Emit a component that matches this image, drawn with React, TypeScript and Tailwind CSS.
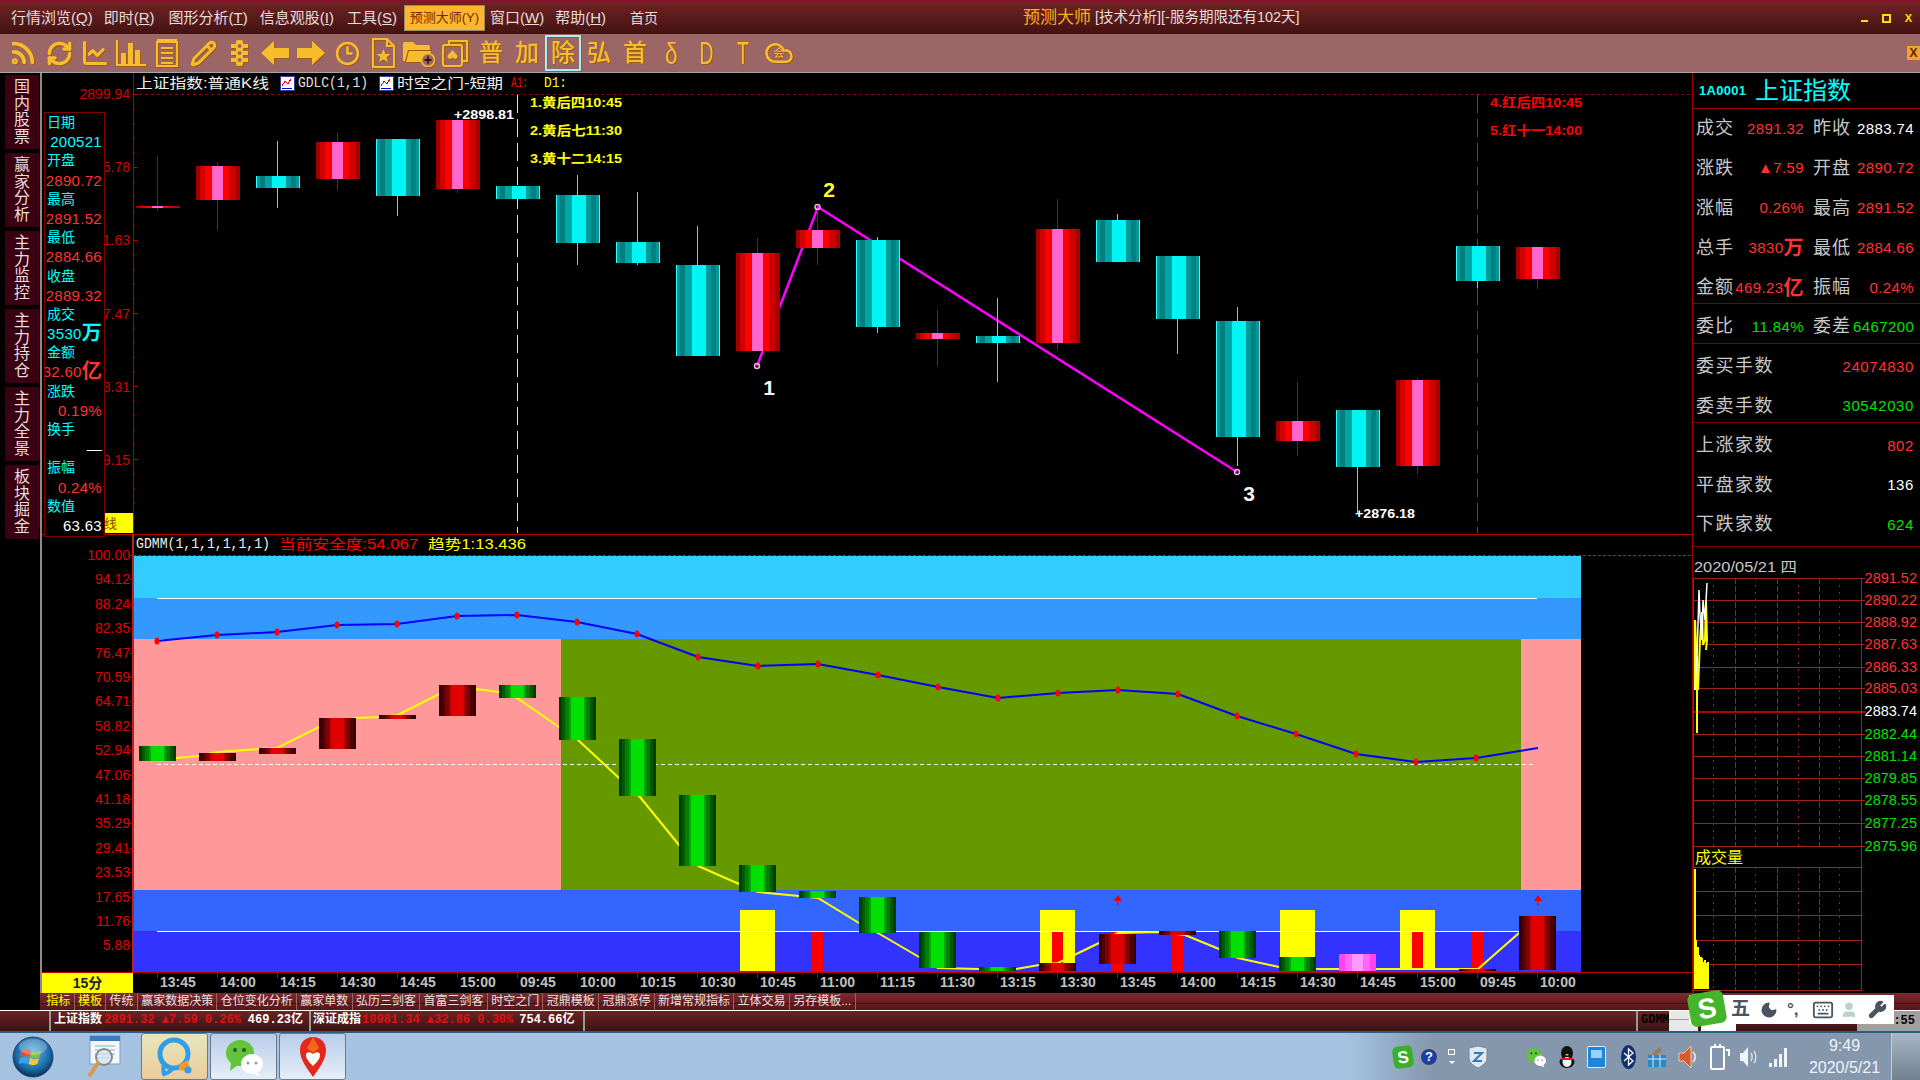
import React from "react";
import { Rss, RefreshCw, ChartLine, Pencil, Clock3, Moon, Keyboard, User, Wrench, Cloud } from "lucide-react";

const SANS = "font-['Liberation_Sans','Noto_Sans_CJK_SC',sans-serif]";
const MONO = "font-['Liberation_Mono','Noto_Sans_CJK_SC',monospace]";

type Stop = [number, string];

const Stripes = ({ id, stops }: { id: string; stops: Stop[] }) => (
  <linearGradient id={id} x1="0" x2="1" y1="0" y2="0">
    {stops.map((s, i) => (
      <React.Fragment key={i}>
        <stop offset={i === 0 ? 0 : stops[i - 1][0]} stopColor={s[1]} />
        <stop offset={s[0]} stopColor={s[1]} />
      </React.Fragment>
    ))}
  </linearGradient>
);

const redStops: Stop[] = [[0.08, "#a00000"], [0.2, "#d00000"], [0.36, "#ff0000"], [0.62, "#ff66cc"], [0.75, "#ff0000"], [0.88, "#cc0000"], [1, "#a80000"]];
const cyanStops: Stop[] = [[0.02, "#33ffff"], [0.1, "#009999"], [0.2, "#007f7f"], [0.36, "#00a5a5"], [0.68, "#00f5f5"], [0.8, "#009999"], [0.92, "#008080"], [0.97, "#009999"], [1, "#33ffff"]];
const greenStops: Stop[] = [[0.08, "#003c00"], [0.16, "#005a00"], [0.26, "#008000"], [0.33, "#00aa00"], [0.67, "#00e000"], [0.74, "#00aa00"], [0.84, "#008000"], [0.92, "#005a00"], [1, "#003c00"]];
const darkRedStops: Stop[] = [[0.08, "#300000"], [0.16, "#500000"], [0.26, "#800000"], [0.33, "#b00000"], [0.67, "#e00000"], [0.74, "#b00000"], [0.84, "#800000"], [0.92, "#500000"], [1, "#300000"]];
const pinkStops: Stop[] = [[0.15, "#ff44ee"], [0.35, "#ff66ff"], [0.65, "#ff99ff"], [0.85, "#ff66ff"], [1, "#ff44ee"]];

// i, top, bottom, wick top, wick bottom, colour
const candles: [number, number, number, number, number, "r" | "c"][] = [
  [0, 206, 208, 156, 211, "r"], [1, 166, 200, 162, 230, "r"], [2, 176, 188, 141, 208, "c"], [3, 142, 179, 133, 190, "r"],
  [4, 139, 196, 139, 216, "c"], [5, 120, 189, 116, 193, "r"], [6, 186, 199, 186, 199, "c"], [7, 195, 243, 175, 265, "c"],
  [8, 242, 263, 192, 265, "c"], [9, 265, 356, 226, 356, "c"], [10, 253, 351, 238, 351, "r"], [11, 230, 248, 210, 265, "r"],
  [12, 240, 327, 237, 333, "c"], [13, 333, 339, 310, 366, "r"], [14, 336, 343, 298, 382, "c"], [15, 229, 343, 199, 350, "r"],
  [16, 220, 262, 214, 262, "c"], [17, 256, 319, 256, 354, "c"], [18, 321, 437, 307, 466, "c"], [19, 421, 441, 382, 456, "r"],
  [20, 410, 467, 410, 514, "c"], [21, 380, 466, 378, 474, "r"], [22, 246, 281, 246, 288, "c"], [23, 247, 279, 247, 289, "r"],
];

// left, top, bottom, fill
const subCandles: [number, number, number, string][] = [
  [139, 746, 761, "g"], [199, 753, 761, "d"], [259, 748, 754, "d"], [319, 718, 749, "d"], [379, 715, 719, "d"], [439, 685, 716, "d"],
  [499, 685, 698, "g"], [559, 697, 740, "g"], [619, 739, 796, "g"], [679, 795, 866, "g"], [739, 865, 892, "g"], [799, 891, 898, "g"],
  [859, 897, 933, "g"], [919, 932, 968, "g"], [979, 967, 971, "g"], [1039, 963, 971, "d"], [1099, 934, 964, "d"], [1159, 931, 935, "d"],
  [1219, 931, 958, "g"], [1279, 957, 971, "g"], [1339, 954, 971, "p"], [1459, 969, 971, "d"], [1519, 916, 970, "d"],
];

const yellowLine = "176,758 199,756 218,752 259,749 277,748 319,727 356,718 379,717 398,715 439,694 476,689 499,692 517,698 559,727 578,740 619,778 640,797 679,845 698,866 739,884 758,892 799,896 818,898 859,923 878,933 919,957 938,968 979,969 1016,969 1039,965 1058,963 1099,943 1118,933 1159,932 1185,935 1219,949 1238,958 1279,967 1316,969 1400,969 1459,969 1478,969 1519,933";
const bluePts = [[157, 641], [217, 635], [277, 632], [337, 625], [397, 624], [457, 616], [517, 615], [577, 622], [637, 634], [698, 657], [758, 666], [818, 664], [878, 675], [938, 687], [998, 698], [1058, 693], [1118, 690], [1178, 694], [1237, 716], [1296, 734], [1356, 754], [1416, 762], [1476, 758]];

const times = ["13:45", "14:00", "14:15", "14:30", "14:45", "15:00", "09:45", "10:00", "10:15", "10:30", "10:45", "11:00", "11:15", "11:30", "13:15", "13:30", "13:45", "14:00", "14:15", "14:30", "14:45", "15:00", "09:45", "10:00"];
const subAxis = ["100.00", "94.12", "88.24", "82.35", "76.47", "70.59", "64.71", "58.82", "52.94", "47.06", "41.18", "35.29", "29.41", "23.53", "17.65", "11.76", "5.88"];
const tabs = ["指标", "模板", "传统", "赢家数据决策", "仓位变化分析", "赢家单数", "弘历三剑客", "首富三剑客", "时空之门", "冠鼎模板", "冠鼎涨停", "新增常规指标", "立体交易", "另存模板..."];
const sideTabs = ["国内股票", "赢家分析", "主力监控", "主力持仓", "主力全景", "板块掘金"];

const GOLD = "text-[#f7bd2c] drop-shadow-[1px_1px_0_#a05a14]";

const MenuItem = ({ label, k, className }: { label: string; k: string; className?: string }) => (
  <span className={`whitespace-nowrap text-[15px] text-[#e6dcdc] ${className ?? ""}`}>
    {label}(<span className="underline">{k}</span>)
  </span>
);

const MenuBar = () => (
  <div className="flex h-[34px] items-center border-t-2 border-[#8a1030] bg-linear-to-b from-[#6e2422] to-[#441213] pl-[11px]">
    <MenuItem label="行情浏览" k="Q" />
    <MenuItem label="即时" k="R" className="ml-[11px]" />
    <MenuItem label="图形分析" k="T" className="ml-[14px]" />
    <MenuItem label="信息观股" k="I" className="ml-[12px]" />
    <MenuItem label="工具" k="S" className="ml-[13px]" />
    <span className="ml-[7px] flex h-[26px] w-[81px] items-center justify-center whitespace-nowrap border border-[#9a8a60] bg-[#ffb52e] text-[13px] text-[#6b3000]">预测大师(Y)</span>
    <MenuItem label="窗口" k="W" className="ml-[5px]" />
    <MenuItem label="帮助" k="H" className="ml-[11px]" />
    <span className="ml-[24px] whitespace-nowrap text-[14px] text-[#e6dcdc]">首页</span>
    <span className="ml-[365px] whitespace-nowrap text-[17px] text-[#ffb020]">预测大师</span>
    <span className="ml-[4px] whitespace-nowrap text-[14.5px] text-[#e6dcdc]">[技术分析][-服务期限还有102天]</span>
    <div className="ml-auto mr-[8px] flex items-center gap-[14px] text-[11px] font-bold text-[#ffe000]">
      <span className="mt-[6px] block h-[2px] w-[7px] bg-[#ffe000]" />
      <span className="block h-[9px] w-[9px] border-2 border-[#ffe000]" />
      <span className="leading-none">X</span>
    </div>
  </div>
);

const Bars = () => (
  <svg width="30" height="26" viewBox="0 0 30 26" fill="currentColor">
    <rect x="0" y="0" width="2" height="26" />
    <rect x="0" y="24" width="30" height="2" />
    <rect x="5" y="13" width="5" height="11" />
    <rect x="12" y="3" width="5" height="21" />
    <rect x="19" y="10" width="5" height="14" />
  </svg>
);
const Notes = () => (
  <svg width="22" height="28" viewBox="0 0 22 28" fill="none" stroke="currentColor" strokeWidth="2">
    <rect x="1" y="3" width="20" height="24" />
    <path d="M1 1h20M5 9h12M5 14h12M5 19h12M5 24h12" />
  </svg>
);
const Traffic = () => (
  <svg width="17" height="26" viewBox="0 0 17 26" fill="currentColor">
    <rect x="5" y="0" width="7" height="26" rx="2" />
    <path d="M0 4h5v4H0zM12 4h5v4h-5zM0 11h5v4H0zM12 11h5v4h-5zM0 18h5v4H0zM12 18h5v4h-5z" />
    <circle cx="8.5" cy="6" r="2" fill="#9d6666" />
    <circle cx="8.5" cy="13" r="2" fill="#9d6666" />
    <circle cx="8.5" cy="20" r="2" fill="#9d6666" />
  </svg>
);
const ArrowL = ({ flip }: { flip?: boolean }) => (
  <svg width="28" height="24" viewBox="0 0 28 24" fill="currentColor" className={flip ? "-scale-x-100" : ""}>
    <path d="M0 12 13 0v7h15v10H13v7z" />
  </svg>
);
const DocStar = () => (
  <svg width="23" height="30" viewBox="0 0 23 30" fill="none" stroke="currentColor" strokeWidth="2">
    <path d="M1 1h14l7 7v21H1zM15 1v7h7" />
    <path d="m11.5 11 2 5h5l-4 3.2 1.5 5-4.500-3-4.500 3 1.500-5-4-3.200h5z" fill="currentColor" stroke="none" />
  </svg>
);
const FolderAdd = () => (
  <svg width="32" height="27" viewBox="0 0 32 27" fill="currentColor">
    <path d="M0 4a2 2 0 0 1 2-2h8l3 3h12a2 2 0 0 1 2 2v3H5l-3 11H0z" />
    <path d="M6 11h22l-3 11H3z" />
    <circle cx="25" cy="20" r="6.500" fill="#9d6666" stroke="currentColor" strokeWidth="1.500" />
    <path d="M25 16.500v7M21.500 20h7" stroke="#3a1a10" strokeWidth="2" />
  </svg>
);
const CardIcon = () => (
  <svg width="26" height="28" viewBox="0 0 26 28" fill="none" stroke="currentColor" strokeWidth="2">
    <rect x="1" y="6" width="19" height="21" rx="2" />
    <path d="M7 6V2h18v20h-5" />
    <path d="M10.500 11c2 3 5 4 5 7 0 2-3.500 2.500-5 .5-1.500 2-5 1.500-5-.5 0-3 3-4 5-7z" fill="currentColor" stroke="none" />
  </svg>
);

const toolItems: React.ReactNode[] = [
  <Rss size={28} strokeWidth={3.2} />, <RefreshCw size={27} strokeWidth={3} />, <ChartLine size={28} strokeWidth={2.6} />, <Bars />, <Notes />,
  <Pencil size={27} strokeWidth={2.6} />, <Traffic />, <ArrowL />, <ArrowL flip />, <Clock3 size={25} strokeWidth={2.4} />, <DocStar />,
  <FolderAdd />, <CardIcon />,
];
const toolChars: [string, string][] = [
  ["普", "text-[24px]"], ["加", "text-[24px]"], ["除", "text-[24px] border-2 border-[#a8f0f0]"], ["弘", "text-[24px]"], ["首", "text-[24px]"],
  ["δ", "text-[30px]"], ["D", "text-[32px]"], ["T", "text-[32px]"],
];

const ToolBar = () => (
  <div className="flex h-[39px] items-center justify-between border-b border-[#a8a8a8] bg-[#9d6666] pl-[5px]">
    <div className="flex items-center">
      {toolItems.map((n, i) => (
        <span key={i} className={`flex h-[36px] w-[36px] items-center justify-center ${GOLD}`}>{n}</span>
      ))}
      {toolChars.map(([c, cls]) => (
        <span key={c} className={`flex h-[36px] w-[36px] items-center justify-center font-medium ${GOLD} ${cls}`}>
          <span className={c === "D" || c === "T" ? "scale-x-[0.6]" : c === "δ" ? "scale-x-75" : ""}>{c}</span>
        </span>
      ))}
      <span className={`relative flex h-[36px] w-[36px] items-center justify-center ${GOLD}`}>
        <Cloud size={30} strokeWidth={2} />
        <span className="absolute text-[11px]">会</span>
      </span>
    </div>
    <span className="flex h-[14px] w-[13px] items-center justify-center bg-[#f2a030] text-[12px] font-bold text-[#5a2a00]">X</span>
  </div>
);

const SideBar = () => (
  <div className="flex w-[40px] flex-col items-end gap-[4px] bg-black pt-[2px] pr-[1px]">
    {sideTabs.map((t) => (
      <div key={t} className="flex h-[74px] w-[34px] flex-col items-center justify-center bg-[#3a0012] text-[16px] leading-[16.5px] text-[#e8dcdc]">
        {t.split("").map((c, i) => <span key={i}>{c}</span>)}
      </div>
    ))}
  </div>
);

const ChartIconSmall = ({ x }: { x: number }) => (
  <g shapeRendering="crispEdges">
    <rect x={x} y="76" width="14" height="14" fill="#fff" stroke="#334488" />
    <path d={`M${x + 2} 86l3-5 3 3 3-5`} fill="none" stroke="#e00000" />
    <path d={`M${x + 2} 88h10`} stroke="#0000dd" />
  </g>
);

const UpperChart = () => (
  <svg width="1650" height="462" viewBox="42 73 1650 462" className={`block ${SANS}`}>
    <defs>
      <Stripes id="redC" stops={redStops} />
      <Stripes id="cyanC" stops={cyanStops} />
    </defs>
    <rect x="133" y="73" width="1" height="462" fill="#b00000" />
    <rect x="42" y="534" width="1650" height="1" fill="#b00000" />
    <line x1="133" x2="1692" y1="94.5" y2="94.5" stroke="#a00000" strokeDasharray="3 3" />
    {Array.from({ length: 30 }, (_, i) => (
      <rect key={i} x="133" y={94 + i * 14.6} width={i % 5 === 0 ? 4 : 2} height="1" fill="#c00000" />
    ))}
    <g fill="#d00000" fontSize="14" textAnchor="end" dominantBaseline="central">
      <text x="130" y="94">2899.94</text>
      <text x="130" y="167">5.78</text>
      <text x="130" y="240">1.63</text>
      <text x="130" y="314">7.47</text>
      <text x="130" y="387">3.31</text>
      <text x="130" y="460">9.15</text>
    </g>
    <rect x="102" y="513" width="31" height="20" fill="#ffff00" />
    <text x="104" y="523" fontSize="13" fill="#884400" dominantBaseline="central">线</text>

    <g fontSize="14" dominantBaseline="central">
      <text x="136" y="83" fill="#f0f0f0" textLength="133" lengthAdjust="spacingAndGlyphs">上证指数:普通K线</text>
      <text x="298" y="83" fill="#e0e0e0" textLength="70" lengthAdjust="spacingAndGlyphs" className={MONO}>GDLC(1,1)</text>
      <text x="397" y="83" fill="#f0f0f0" textLength="106" lengthAdjust="spacingAndGlyphs">时空之门-短期</text>
      <text x="511" y="83" fill="#ff0000" textLength="17" lengthAdjust="spacingAndGlyphs" className={MONO}>A1:</text>
      <text x="544" y="83" fill="#ffff00" textLength="23" lengthAdjust="spacingAndGlyphs" className={MONO}>D1:</text>
    </g>
    <ChartIconSmall x={280} />
    <ChartIconSmall x={379} />

    <line x1="517.5" x2="517.500" y1="95" y2="533" stroke="#ffff00" strokeDasharray="18 6" />
    <line x1="1477.5" x2="1477.500" y1="95" y2="533" stroke="#e01010" strokeDasharray="18 6" />

    <polyline points="757,366 818,207 1237,472" fill="none" stroke="#ff00ff" strokeWidth="2.500" />

    <g shapeRendering="crispEdges">
      {candles.map(([i, top, bot, wt, wb, k]) => (
        <g key={i}>
          <rect x={157 + i * 60} y={wt} width="1" height={wb - wt} fill={k === "r" ? "#c00000" : "#40e8e8"} />
          <rect x={136 + i * 60} y={top} width="44" height={bot - top} fill={k === "r" ? "url(#redC)" : "url(#cyanC)"} />
        </g>
      ))}
    </g>
    <circle cx="757" cy="366" r="2.500" fill="none" stroke="#f0b0e0" strokeWidth="1.500" />
    <circle cx="817.500" cy="207" r="2.500" fill="none" stroke="#f0b0e0" strokeWidth="1.500" />
    <circle cx="1237" cy="472" r="2.500" fill="none" stroke="#f0b0e0" strokeWidth="1.500" />

    <g fontSize="13" fontWeight="700" dominantBaseline="central">
      <text x="530" y="102" fill="#ffff00" textLength="92" lengthAdjust="spacingAndGlyphs">1.黄后四10:45</text>
      <text x="530" y="130" fill="#ffff00" textLength="92" lengthAdjust="spacingAndGlyphs">2.黄后七11:30</text>
      <text x="530" y="158" fill="#ffff00" textLength="92" lengthAdjust="spacingAndGlyphs">3.黄十二14:15</text>
      <text x="1490" y="102" fill="#ff0000" textLength="92" lengthAdjust="spacingAndGlyphs">4.红后四10:45</text>
      <text x="1490" y="130" fill="#ff0000" textLength="92" lengthAdjust="spacingAndGlyphs">5.红十一14:00</text>
      <text x="454" y="114" fill="#ffffff" textLength="60" lengthAdjust="spacingAndGlyphs">+2898.81</text>
      <text x="1355" y="513" fill="#ffffff" textLength="60" lengthAdjust="spacingAndGlyphs">+2876.18</text>
    </g>
    <g fontSize="21" fontWeight="700" textAnchor="middle" dominantBaseline="central">
      <text x="769" y="387" fill="#f4f4f4">1</text>
      <text x="829" y="189" fill="#ffff33">2</text>
      <text x="1249" y="493" fill="#f4f4f4">3</text>
    </g>
  </svg>
);

const SubChart = () => (
  <svg width="1650" height="438" viewBox="42 535 1650 438" className={`block ${SANS}`}>
    <defs>
      <Stripes id="greenS" stops={greenStops} />
      <Stripes id="darkS" stops={darkRedStops} />
      <Stripes id="pinkS" stops={pinkStops} />
    </defs>
    <g fontSize="14" dominantBaseline="central">
      <text x="136" y="544" fill="#f0f0f0" textLength="134" lengthAdjust="spacingAndGlyphs" className={MONO}>GDMM(1,1,1,1,1,1)</text>
      <text x="279" y="544" fill="#ff0000" textLength="139" lengthAdjust="spacingAndGlyphs">当前安全度:54.067</text>
      <text x="428" y="544" fill="#ffff00" textLength="98" lengthAdjust="spacingAndGlyphs">趋势1:13.436</text>
    </g>
    <line x1="133" x2="1692" y1="555.5" y2="555.5" stroke="#803030" strokeDasharray="3 2" />
    <g shapeRendering="crispEdges">
      <rect x="133" y="556" width="1448" height="42" fill="#33ccff" />
      <rect x="133" y="598" width="1448" height="41" fill="#3399ff" />
      <rect x="133" y="639" width="428" height="251" fill="#ff9999" />
      <rect x="561" y="639" width="960" height="251" fill="#669900" />
      <rect x="1521" y="639" width="60" height="251" fill="#ff9999" />
      <rect x="133" y="890" width="1448" height="41" fill="#3366ff" />
      <rect x="133" y="931" width="1448" height="41" fill="#3333ff" />
      <rect x="42" y="972" width="1650" height="1" fill="#c00000" />
      <rect x="132" y="535" width="2" height="438" fill="#c02020" />
      {subAxis.map((_, i) => <rect key={i} x="130" y={555 + i * 24.4} width="3" height="1" fill="#c00000" />)}
      {[[740, 910, 61], [1040, 910, 53], [1280, 910, 47], [1400, 910, 59]].map(([x, y, h]) => (
        <rect key={x} x={x} y={y} width="35" height={h} fill="#ffff00" />
      ))}
      {[[812, 40], [1052, 32], [1112, 40], [1172, 40], [1412, 38], [1472, 40]].map(([x, h]) => (
        <rect key={x} x={x} y="931" width="11" height={h} fill="#ff0000" />
      ))}
      <rect x="157" y="598" width="1380" height="1" fill="#ffffff" />
      <rect x="157" y="931" width="1380" height="1" fill="#ffffff" />
    </g>
    <line x1="157" x2="1536" y1="764.5" y2="764.5" stroke="#ffffff" strokeDasharray="4 3" />
    <polyline points={yellowLine} fill="none" stroke="#ffff00" strokeWidth="2" />
    <g shapeRendering="crispEdges">
      {subCandles.map(([x, t, b, k]) => (
        <rect key={x} x={x} y={t} width="37" height={b - t} fill={k === "g" ? "url(#greenS)" : k === "p" ? "url(#pinkS)" : "url(#darkS)"} />
      ))}
    </g>
    <polyline points={bluePts.map((p) => p.join(",")).join(" ") + " 1538,748"} fill="none" stroke="#0000ff" strokeWidth="2" />
    {bluePts.map(([x, y]) => <ellipse key={x} cx={x} cy={y} rx="2.500" ry="3.500" fill="#ff0000" />)}
    {[1118, 1538].map((x) => (
      <g key={x} fill="#e80000">
        <path d={`M${x - 4} 901l4-6 4 6z`} />
        <rect x={x - 0.5} y="900" width="1" height="6" />
      </g>
    ))}
    <g fill="#e00000" fontSize="14" textAnchor="end" dominantBaseline="central">
      {subAxis.map((v, i) => <text key={v} x="130" y={555 + i * 24.4}>{v}</text>)}
    </g>
  </svg>
);

const infoRows: [string, string, string?][] = [
  ["日期", "c"], ["200521", "c"], ["开盘", "c"], ["2890.72", "r"], ["最高", "c"], ["2891.52", "r"], ["最低", "c"], ["2884.66", "r"],
  ["收盘", "c"], ["2889.32", "r"], ["成交", "c"], ["3530", "c", "万"], ["金额", "c"], ["32.60", "r", "亿"], ["涨跌", "c"], ["0.19%", "r"],
  ["换手", "c"], ["—", "w"], ["振幅", "c"], ["0.24%", "r"], ["数值", "c"], ["63.63", "w"],
];

const InfoBox = () => (
  <div className={`absolute top-[39px] left-[2px] flex h-[425px] w-[61px] flex-col overflow-hidden border border-[#800000] bg-black ${SANS}`}>
    {infoRows.map(([t, k, unit], i) => {
      const color = k === "c" ? "text-[#00ffff]" : k === "r" ? "text-[#ff3232]" : "text-white";
      return i % 2 === 0 ? (
        <div key={i} className={`h-[19.2px] pl-[2px] text-[14px] leading-[19.2px] ${color}`}>{t}</div>
      ) : (
        <div key={i} className={`flex h-[19.2px] items-center justify-end whitespace-nowrap pr-[2px] text-[15px] leading-[19.2px] tracking-[0.3px] ${color}`}>
          {t}{unit && <span className="text-[20px] font-bold">{unit}</span>}
        </div>
      );
    })}
  </div>
);

const AxisRow = () => (
  <div className={`flex h-[20px] bg-black ${SANS}`}>
    <div className="flex w-[91px] items-center justify-center bg-[#ffff00] text-[14px] font-bold text-[#222]">15分</div>
    <div className="flex pl-[24px]">
      {times.map((t, i) => (
        <div key={i} className="flex w-[60px] items-start">
          <span className="h-[5px] w-px bg-[#c00000]" />
          <span className="ml-[2px] text-[14px] leading-[18px] font-bold text-[#c0c0c0]">{t}</span>
        </div>
      ))}
    </div>
  </div>
);

const StatRow = ({ a, av, ac, b, bv, bc, unit }: { a: string; av: string; ac: string; b: string; bv: string; bc: string; unit?: string }) => (
  <div className="flex h-[39.75px] shrink-0 items-center">
    <span className="w-[42px] shrink-0 pl-[3px] text-[18px] tracking-[1px] whitespace-nowrap text-[#c8c8c8]">{a}</span>
    <span className={`w-[69px] shrink-0 whitespace-nowrap text-right text-[15px] tracking-[0.4px] ${ac}`}>
      <span className="float-right flex items-center">{av}{unit && <span className="text-[20px] font-bold">{unit}</span>}</span>
    </span>
    <span className="ml-[9px] w-[40px] shrink-0 text-[18px] tracking-[1px] whitespace-nowrap text-[#c8c8c8]">{b}</span>
    <span className={`flex-1 whitespace-nowrap pr-[6px] text-right text-[15px] tracking-[0.4px] ${bc}`}>{bv}</span>
  </div>
);

const WideRow = ({ a, v, c }: { a: string; v: string; c: string }) => (
  <div className="flex h-[39.5px] shrink-0 items-center justify-between pr-[6px] pl-[3px]">
    <span className="text-[18px] tracking-[1.5px] text-[#c8c8c8]">{a}</span>
    <span className={`text-[15px] tracking-[0.6px] ${c}`}>{v}</span>
  </div>
);

const RED = "text-[#ff3232]";
const GREEN = "text-[#00e000]";

const StatPanel = () => (
  <div className={`flex flex-col ${SANS}`}>
    <div className="flex h-[36px] items-center border-b border-[#a00000] pl-[6px]">
      <span className="w-[56px] text-[13px] font-bold tracking-[0.3px] text-[#00ffff]">1A0001</span>
      <span className="text-[24px] leading-none text-[#00ffff]">上证指数</span>
    </div>
    <div className="relative flex h-[195px] flex-col border-b border-[#800000]">
      <StatRow a="成交" av="2891.32" ac={RED} b="昨收" bv="2883.74" bc="text-white" />
      <StatRow a="涨跌" av="▲7.59" ac={RED} b="开盘" bv="2890.72" bc={RED} />
      <StatRow a="涨幅" av="0.26%" ac={RED} b="最高" bv="2891.52" bc={RED} />
      <StatRow a="总手" av="3830" unit="万" ac={RED} b="最低" bv="2884.66" bc={RED} />
      <StatRow a="金额" av="469.23" unit="亿" ac={RED} b="振幅" bv="0.24%" bc={RED} />
    </div>
    <div className="h-[40px] border-b border-[#800000] pt-[3px]">
      <StatRow a="委比" av="11.84%" ac={GREEN} b="委差" bv="6467200" bc={GREEN} />
    </div>
    <div className="flex h-[79px] flex-col border-b border-[#800000] pt-[3px]">
      <WideRow a="委买手数" v="24074830" c={RED} />
      <WideRow a="委卖手数" v="30542030" c={GREEN} />
    </div>
    <div className="flex h-[124px] flex-col border-b border-[#800000] pt-[3px]">
      <WideRow a="上涨家数" v="802" c={RED} />
      <WideRow a="平盘家数" v="136" c="text-white" />
      <WideRow a="下跌家数" v="624" c={GREEN} />
    </div>
  </div>
);

const priceRows: [string, number, string][] = [
  ["2891.52", 578, "#ff3232"], ["2890.22", 600, "#ff3232"], ["2888.92", 622, "#ff3232"], ["2887.63", 644, "#ff3232"], ["2886.33", 667, "#ff3232"], ["2885.03", 688, "#ff3232"],
  ["2883.74", 711, "#ffffff"], ["2882.44", 734, "#00e000"], ["2881.14", 756, "#00e000"], ["2879.85", 778, "#00e000"], ["2878.55", 800, "#00e000"], ["2877.25", 823, "#00e000"], ["2875.96", 846, "#00e000"],
];
const volBars = [[1694, 869], [1695, 940], [1697, 947], [1698, 955], [1700, 957], [1701, 958], [1703, 962], [1704, 960], [1706, 963], [1707, 962]];

const MiniChart = () => (
  <svg width="227" height="446" viewBox="1693 547 227 446" className={`block ${SANS}`}>
    <text x="1694" y="567" fill="#c8c8c8" fontSize="14" dominantBaseline="central" textLength="103" lengthAdjust="spacingAndGlyphs">2020/05/21 四</text>
    <g shapeRendering="crispEdges">
      {priceRows.map(([, y]) => <rect key={y} x="1693" y={y} width="172" height={y === 711 ? 2 : 1} fill={y === 711 ? "#b00000" : "#a02020"} />)}
      {[867, 891, 915, 940, 964, 990].map((y) => <rect key={y} x="1693" y={y} width="169" height="1" fill="#a02020" />)}
      <rect x="1693" y="578" width="1" height="412" fill="#a02020" />
      <rect x="1861" y="578" width="1" height="412" fill="#a02020" />
      {[[578, 268], [867, 123]].map(([y, h]) =>
        [1735, 1777, 1819].map((x) => <line key={`${x}${y}`} x1={x + 0.5} x2={x + 0.5} y1={y} y2={y + h} stroke="#a02020" strokeDasharray="6 2" />)
      )}
      {[[578, 268], [867, 123]].map(([y, h]) =>
        [1713, 1755, 1798, 1839].map((x) => <line key={`${x}${y}`} x1={x + 0.5} x2={x + 0.5} y1={y} y2={y + h} stroke="#a02020" strokeDasharray="2 5" />)
      )}
      {volBars.map(([x, y]) => <rect key={x} x={x} y={y} width="2" height={989 - y} fill="#ffff00" />)}
    </g>
    <polyline points="1697,733 1697,656 1695,690 1695,620 1698,690 1700,640 1702,612 1703,645 1705,640 1706,600 1707,640 1706,650" fill="none" stroke="#ffff00" strokeWidth="2" />
    <polyline points="1695,690 1697,655 1698,625 1699,590 1700,615 1702,640 1703,600 1705,620 1707,583" fill="none" stroke="#ffffff" strokeWidth="1.500" />
    <g fontSize="14.500" textAnchor="end" dominantBaseline="central">
      {priceRows.map(([t, y, c]) => <text key={y} x="1917" y={y} fill={c}>{t}</text>)}
    </g>
    <text x="1695" y="857" fill="#ffff00" fontSize="16" dominantBaseline="central">成交量</text>
  </svg>
);

const TabsRow = () => (
  <div className={`flex h-[17px] items-center bg-[linear-gradient(#7c2a2e_0%,#661e22_58%,#4a0c10_58%,#4a0c10_66%,#661e22_66%,#54161a_100%)] pl-[3px] text-[12px] leading-[17px] ${SANS}`}>
    {tabs.map((t, i) => (
      <span key={t} className={`whitespace-nowrap border-r border-[#a06060] px-[3.300px] ${i < 2 ? "text-[#ffff00]" : "text-[#e8e0e0]"}`}>{t}</span>
    ))}
  </div>
);

const StatusBar = () => (
  <div className={`flex h-[21px] border-t border-white bg-linear-to-b from-[#6a2424] to-[#3f1212] text-[12px] leading-[19px] ${MONO}`}>
    <div className="w-[51px] border-r-2 border-[#999]" />
    <div className="flex w-[260px] gap-[7px] whitespace-nowrap border-r-2 border-[#999] pl-[3px] font-bold">
      <span className="text-white">上证指数</span>
      <span className="ml-[-5px] text-[#e01010]">2891.32 ▲7.59 0.26%</span>
      <span className="text-white">469.23亿</span>
    </div>
    <div className="flex w-[274px] gap-[6px] whitespace-nowrap border-r-2 border-[#999] pl-[2px] font-bold">
      <span className="text-white">深证成指</span>
      <span className="ml-[-5px] text-[#e01010]">10981.34 ▲32.86 0.30%</span>
      <span className="text-white">754.66亿</span>
    </div>
    <div className="w-[1053px] border-r-2 border-[#999]" />
    <span className="ml-[3px] w-[28px] font-bold text-black">GDMM</span>
    <div className="flex w-[29px] flex-col bg-[#e8e8e8]">
      <span className="h-[9px] border-b border-[#999]" />
    </div>
    <div className="ml-[3px] h-full w-[35px] bg-white" />
    <div className="ml-auto flex h-full w-[63px] items-center justify-end bg-[#a0a0a0] pr-[5px] font-bold text-black">:55</div>
  </div>
);

const Orb = () => (
  <svg width="42" height="42" viewBox="0 0 42 42">
    <defs>
      <radialGradient id="orbBg" cx="50%" cy="40%" r="60%">
        <stop offset="0" stopColor="#5fb6e8" />
        <stop offset="0.7" stopColor="#1a6aa8" />
        <stop offset="1" stopColor="#0b2e52" />
      </radialGradient>
    </defs>
    <circle cx="21" cy="21" r="20" fill="url(#orbBg)" stroke="#29476a" />
    <path d="M10 15c3-2 6-2 9 0l-1.500 6c-3-1.500-6-1.500-9 0z" fill="#f04a28" />
    <path d="M20 15c3 1.500 6 1.500 9-.5L27.500 21c-3 1.500-6 1.500-9 0z" fill="#7ec832" />
    <path d="M8 22c3-1.500 6-1.500 9 0l-1.500 6c-3-1.500-6-1.500-9 0z" fill="#37a4e8" />
    <path d="M18 22c3 1.500 6 1.500 9 0l-1.500 6c-3 1.500-6 1.500-9 0z" fill="#f8c62e" />
    <ellipse cx="21" cy="11" rx="14" ry="8" fill="#ffffff" opacity="0.25" />
  </svg>
);

const MagDoc = () => (
  <svg width="38" height="44" viewBox="0 0 36 44">
    <rect x="3" y="1" width="30" height="28" fill="#f4f8fc" stroke="#7aa0c8" />
    <rect x="3" y="1" width="30" height="5" fill="#3a78c0" />
    <path d="M8 11h20M8 15h20M8 19h20M8 23h14" stroke="#8aa8c8" />
    <circle cx="17" cy="22" r="8" fill="#cfe4f4" fillOpacity="0.7" stroke="#8a8a8a" strokeWidth="2" />
    <path d="M11 28 3 40" stroke="#d89a48" strokeWidth="4" strokeLinecap="round" />
  </svg>
);

const QQBrowser = () => (
  <svg width="40" height="42" viewBox="0 0 40 42">
    <ellipse cx="19" cy="18" rx="14" ry="14" fill="none" stroke="#2f9ee8" strokeWidth="5" />
    <path d="M9 28c-1 4-1 7 0 10 4-1 7-3 9-6" fill="none" stroke="#2f9ee8" strokeWidth="4" />
    <path d="M24 29l9-5 1 7-4 4-6-1z" fill="#f79a1e" />
    <circle cx="33" cy="34" r="3.500" fill="#2f9ee8" />
  </svg>
);

const WeChat = ({ s = 42 }: { s?: number }) => (
  <svg width={s} height={s} viewBox="0 0 42 42">
    <ellipse cx="17" cy="17" rx="14" ry="13" fill="#62c43a" />
    <path d="M8 26 7 35l8-6z" fill="#62c43a" />
    <circle cx="12" cy="14" r="2" fill="#2c5a1a" />
    <circle cx="21" cy="14" r="2" fill="#2c5a1a" />
    <ellipse cx="29" cy="28" rx="11" ry="10" fill="#ffffff" />
    <path d="M34 35l3 6-8-4z" fill="#ffffff" />
    <circle cx="25" cy="27" r="1.500" fill="#999" />
    <circle cx="33" cy="27" r="1.500" fill="#999" />
  </svg>
);

const RedPin = () => (
  <svg width="28" height="42" viewBox="0 0 28 42">
    <path d="M14 41C8 32 1 24 1 14 1 6 7 1 14 1s13 5 13 13c0 10-7 18-13 27z" fill="#e4281c" />
    <path d="M14 30c-4-4-7-7-7-11 0-3 3-4 7-1 4-3 7-2 7 1 0 4-3 7-7 11z" fill="#ffffff" />
    <path d="M14 1 8 12l6 5 6-5z" fill="#f06a1c" />
  </svg>
);

const TaskButton = ({ active, children }: { active?: boolean; children: React.ReactNode }) => (
  <div className={`flex h-[47px] w-[67px] items-center justify-center rounded-[3px] border border-[#6a7a8a] ${active ? "bg-linear-to-b from-[#e6e6bc] to-[#eccb9c]" : "bg-linear-to-b from-[#b8cce8] to-[#e6eef8]"}`}>
    {children}
  </div>
);

const Tray = () => (
  <div className="ml-auto flex h-full items-center bg-linear-to-r from-[#a5c3e0] to-[#8497ad] to-[15%] pl-[45px] text-white">
    <div className="flex h-[22px] w-[20px] rotate-[-8deg] items-center justify-center rounded-[5px] bg-[#38b02a] text-[17px] leading-none font-bold text-white">S</div>
    <div className="ml-[6px] flex h-[20px] w-[20px] items-center justify-center rounded-full border-2 border-[#999] bg-[#1a3fa8] text-[13px] font-bold">?</div>
    <div className="ml-[9px] flex flex-col items-center gap-[6px]">
      <span className="h-[6px] w-[7px] border border-white" />
      <span className="h-0 w-0 border-x-[3px] border-t-[3px] border-x-transparent border-t-white" />
    </div>
    <svg width="20" height="24" viewBox="0 0 20 24" className="ml-[13px]">
      <path d="M1 3 10 1l9 2v10c0 5-5 8-9 10-4-2-9-5-9-10z" fill="#e0e8f0" stroke="#6a8aa8" />
      <path d="M6 8h8l-8 8h8" fill="none" stroke="#3a78b0" strokeWidth="2" />
    </svg>
    <span className="ml-[37px]"><WeChat s={22} /></span>
    <svg width="18" height="24" viewBox="0 0 18 24" className="ml-[11px]">
      <ellipse cx="9" cy="8" rx="6" ry="7" fill="#111" />
      <ellipse cx="9" cy="17" rx="7.500" ry="6" fill="#111" />
      <ellipse cx="9" cy="17" rx="4.500" ry="5" fill="#f4f4f4" />
      <path d="M3 13h12v2H3z" fill="#d82020" />
      <path d="M7 9h4l-2 2z" fill="#f4b020" />
    </svg>
    <div className="ml-[11px] h-[22px] w-[19px] rounded-[2px] border border-[#e0e8f0] bg-[#1c86d8]">
      <div className="m-[3px] h-[8px] bg-[#9ad0f4]" />
    </div>
    <svg width="15" height="24" viewBox="0 0 15 24" className="ml-[15px]">
      <ellipse cx="7.500" cy="12" rx="7.500" ry="12" fill="#10306e" />
      <path d="m3 8 9 8-4.500 4V4l4.500 4-9 8" fill="none" stroke="#fff" strokeWidth="1.300" />
    </svg>
    <svg width="20" height="22" viewBox="0 0 20 22" className="ml-[11px]">
      <rect x="1" y="9" width="18" height="12" fill="#2a88c8" />
      <path d="M4 9 12 1l3 3-6 5z" fill="#a07850" />
      <path d="M1 13h18M6 9v12M13 9v12" stroke="#d8e8f4" />
    </svg>
    <svg width="20" height="24" viewBox="0 0 20 24" className="ml-[11px]">
      <path d="M1 8h5l7-7v22l-7-7H1z" fill="#d85a28" stroke="#f0c8a8" />
      <path d="M15 7c3 3 3 7 0 10" fill="none" stroke="#f0d8c8" strokeWidth="2" />
    </svg>
    <svg width="20" height="26" viewBox="0 0 20 26" fill="none" stroke="#fff" strokeWidth="2" className="ml-[12px]">
      <rect x="1" y="3" width="13" height="22" rx="1" />
      <path d="M5 3V0M10 3V0M16 6h3v6" />
    </svg>
    <svg width="18" height="24" viewBox="0 0 18 24" className="ml-[10px]">
      <path d="M0 8h3l5-6v20l-5-6H0z" fill="#f0f4f8" />
      <path d="M11 8c1.500 2 1.500 6 0 8M14 6c2.500 3 2.500 9 0 12" fill="none" stroke="#dde6ee" strokeWidth="1.300" />
    </svg>
    <svg width="18" height="20" viewBox="0 0 18 20" fill="#f0f4f8" className="ml-[11px]">
      <path d="M0 16h3v4H0zM5 12h3v8H5zM10 7h3v13h-3zM15 1h3v19h-3z" />
    </svg>
    <div className="ml-[20px] flex w-[75px] flex-col items-center text-[16px] leading-[22px] text-[#f0f4f8]">
      <span>9:49</span>
      <span className="whitespace-nowrap">2020/5/21</span>
    </div>
    <div className="ml-[9px] h-full w-[29px] border-l border-[#c0d0e0] bg-linear-to-b from-[#a8b8c8] to-[#708090]" />
  </div>
);

const TaskBar = () => (
  <div className={`flex h-[49px] items-center border-t-2 border-[#23608c] bg-[#a5c3e0] ${SANS}`}>
    <div className="flex w-[66px] justify-center"><Orb /></div>
    <div className="flex w-[75px] justify-start pl-[20px]"><MagDoc /></div>
    <div className="flex gap-[2px]">
      <TaskButton active><QQBrowser /></TaskButton>
      <TaskButton><WeChat /></TaskButton>
      <TaskButton><RedPin /></TaskButton>
    </div>
    <Tray />
  </div>
);

const ImeBar = () => (
  <div className={`absolute top-[995px] left-[1689px] flex h-[29px] w-[205px] items-center bg-white text-[#4a5462] ${SANS}`}>
    <div className="absolute top-[-3px] left-0 flex h-[33px] w-[36px] rotate-[-10deg] items-center justify-center rounded-[6px] bg-[#44b42a] text-[28px] leading-none font-bold text-white">S</div>
    <span className="ml-[42px] text-[19px] font-bold">五</span>
    <Moon size={18} fill="currentColor" className="ml-[10px]" />
    <span className="ml-[9px] w-[16px] text-[17px] font-bold">°,</span>
    <Keyboard size={22} className="ml-[9px]" />
    <User size={18} fill="#bcd0d0" stroke="#bcd0d0" className="ml-[6px]" />
    <Wrench size={19} fill="currentColor" className="ml-[10px]" />
  </div>
);

export default function App() {
  return (
    <div className={`relative flex h-[1080px] w-[1920px] flex-col overflow-hidden bg-black ${SANS}`}>
      <MenuBar />
      <ToolBar />
      <div className="flex h-[937px]">
        <SideBar />
        <div className="flex flex-1 flex-col">
          <div className="flex h-[920px]">
            <div className="relative w-[1652px] border-l-2 border-[#8c8c8c]">
              <UpperChart />
              <InfoBox />
              <SubChart />
              <AxisRow />
            </div>
            <div className="w-[228px] border-l border-[#a00000]">
              <StatPanel />
              <MiniChart />
            </div>
          </div>
          <TabsRow />
        </div>
      </div>
      <StatusBar />
      <TaskBar />
      <ImeBar />
    </div>
  );
}
